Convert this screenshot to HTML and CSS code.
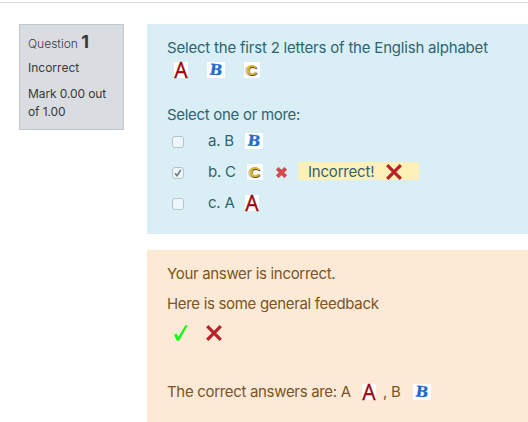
FILE: index.html
```
<!DOCTYPE html>
<html lang="en">
  <head>
    <meta charset="UTF-8" />
    <title>Quiz attempt review</title>
    <link rel="stylesheet" href="styles.css">
    <meta name="viewport" content="width=device-width, initial-scale=1.0">
  </head>
  <body>
    <!-- Shared cross and tick shapes -->
    <svg class="symbols">
      <symbol id="cross" viewBox="0 0 16 16">
        <path d="M1.2 1.2 L14.8 14.8 M14.8 1.2 L1.2 14.8" fill="none" stroke="#b8202a" stroke-width="3.2" />
      </symbol>
      <symbol id="tick" viewBox="0 0 14 16">
        <path d="M0 9.8 L2.4 8.6 L4.4 11.8 L11.4 .2 H13.8 L5 15.8 H2.8 Z" fill="#10fa10" />
      </symbol>
    </svg>

    <div class="question">
      <div class="info">
        <h3 class="number">Question <span class="qno">1</span></h3>
        <div class="state">Incorrect</div>
        <div class="grade">Mark 0.00 out of 1.00</div>
      </div>

      <div class="content">
        <div class="formulation">
          <div class="line qtext">Select the first 2 letters of the English alphabet</div>
          <div class="line letters">
            <span class="tile tile-a">A</span>
            <span class="tile tile-b"><span class="glyph">B</span></span>
            <span class="tile tile-c">C</span>
          </div>
          <div class="line prompt">Select one or more:</div>
          <div class="answer">
            <span class="checkbox"></span>
            <span class="label">a. B</span>
            <span class="tile tile-b"><span class="glyph">B</span></span>
          </div>
          <div class="answer">
            <span class="checkbox">
              <svg viewBox="0 0 10 10"><path d="M2 5.4 L4 7.6 L7.8 2" fill="none" stroke="#747e80" stroke-width="1.6" /></svg>
            </span>
            <span class="label">b. C</span>
            <span class="tile tile-c">C</span>
            <svg class="wrong" viewBox="0 0 11 11"><path d="M1.3 1.3 L9.7 9.7 M9.7 1.3 L1.3 9.7" stroke="#d9484a" stroke-width="3.8" /></svg>
            <span class="specific">
              <span class="specific-text">Incorrect!</span>
              <svg class="cross"><use href="#cross" /></svg>
            </span>
          </div>
          <div class="answer">
            <span class="checkbox"></span>
            <span class="label">c. A</span>
            <span class="tile tile-a">A</span>
          </div>
        </div>

        <div class="outcome">
          <div class="line verdict">Your answer is incorrect.</div>
          <div class="line general">Here is some general feedback</div>
          <div class="line marks">
            <svg class="tick"><use href="#tick" /></svg>
            <svg class="cross"><use href="#cross" /></svg>
          </div>
          <div class="line right-answer">
            <span class="right-text">The correct answers are: A</span>
            <span class="tile tile-a">A</span>
            <span class="next">, B</span>
            <span class="tile tile-b"><span class="glyph">B</span></span>
          </div>
        </div>
      </div>
    </div>
  </body>
</html>
```

FILE: styles.css
```
* {
  box-sizing: border-box;
}
body {
  margin: 0;
  padding-top: 2px;
  background-color: #fff;
  font-family: Inter, "Liberation Sans", sans-serif;
  font-size: 15px;
  line-height: 22px;
  overflow: hidden;
}
.symbols {
  position: absolute;
  width: 0;
  height: 0;
}
.question {
  display: flex;
  align-items: flex-start;
  gap: 23px;
  height: 420px;
  padding: 21px 0 0 19px;
  border-top: 1px solid #dcdedf;
}

/* Left info block */
.info {
  width: 105px;
  height: 106px;
  padding: 7px 7px 0 8px;
  border: 1px solid #bfc7cf;
  background-color: #d9dde1;
  color: #373a3c;
  font-size: 12px;
  line-height: 18px;
}
.number {
  margin: 0;
  font-size: 12px;
  font-weight: 300;
  line-height: 20px;
}
.qno {
  font-size: 18px;
  font-weight: 700;
}
.state {
  margin-top: 5px;
}
.grade {
  margin-top: 8px;
  letter-spacing: -0.1px;
}

/* Question and feedback panels */
.content {
  flex: 1;
}
.formulation {
  height: 210px;
  padding: 13px 20px 15px;
  background-color: #d9eff5;
  color: #2f6473;
  letter-spacing: -0.2px;
}
.line {
  display: flex;
  align-items: center;
  height: 22px;
  white-space: nowrap;
}
.letters {
  padding-left: 7px;
}
.letters .tile-b {
  margin: 0 19px;
}
.prompt {
  margin-top: 23px;
  letter-spacing: -0.3px;
}
.answer {
  display: flex;
  align-items: center;
  height: 31px;
}
.checkbox {
  width: 12px;
  height: 12px;
  margin: 1px 24px 0 5px;
  border: 1px solid #b3c5ca;
  border-radius: 3px;
  background-color: #edf7fb;
}
.checkbox svg {
  display: block;
  width: 10px;
  height: 10px;
}
.label {
  width: 37px;
  margin-top: -2px;
}
.answer .tile {
  margin-top: -1px;
}
.answer .tile-c {
  margin-left: 2px;
}
.wrong {
  width: 11px;
  height: 11px;
  margin: -1px 11px 0 13px;
}
.specific {
  display: flex;
  align-items: center;
  width: 121px;
  height: 18px;
  margin-top: -3px;
  padding: 1px 0 0 10px;
  background-color: #fff0b8;
}
.specific-text {
  width: 78px;
}
.outcome {
  height: 180px;
  margin-top: 16px;
  padding: 13px 20px;
  background-color: #fcead7;
  color: #7a5425;
  letter-spacing: -0.32px;
}
.general {
  margin-top: 8px;
}
.marks {
  margin-top: 7px;
  padding-left: 7px;
  gap: 18px;
}
.right-answer {
  margin-top: 37px;
}
.right-text {
  width: 195px;
}
.next {
  width: 37px;
  padding-left: 7px;
}

/* Small letter pictures */
.tile {
  flex: none;
  width: 18px;
  height: 16px;
  background-color: #fff;
  letter-spacing: 0;
  line-height: 16px;
  text-align: center;
}
.tile-a {
  width: 14px;
  color: #980a0e;
  font-family: "Noto Sans", sans-serif;
  font-size: 21px;
  -webkit-text-stroke: 0.3px #980a0e;
}
.tile-b {
  color: #1f6bd0;
  font-family: "DejaVu Serif", serif;
  font-size: 15px;
  font-weight: 700;
}
.glyph {
  display: block;
  transform: rotate(4deg) skewX(-4deg);
  -webkit-text-stroke: 0.3px #1f6bd0;
}
.tile-c {
  width: 16px;
  color: #d9b92c;
  font-family: "Liberation Sans", sans-serif;
  font-size: 15px;
  font-weight: 700;
  text-shadow: 0.5px 0.5px 0 #6b4d12, -2px 1px 1px #ccc;
}
.cross {
  width: 16px;
  height: 16px;
}
.tick {
  width: 14px;
  height: 16px;
}
```
